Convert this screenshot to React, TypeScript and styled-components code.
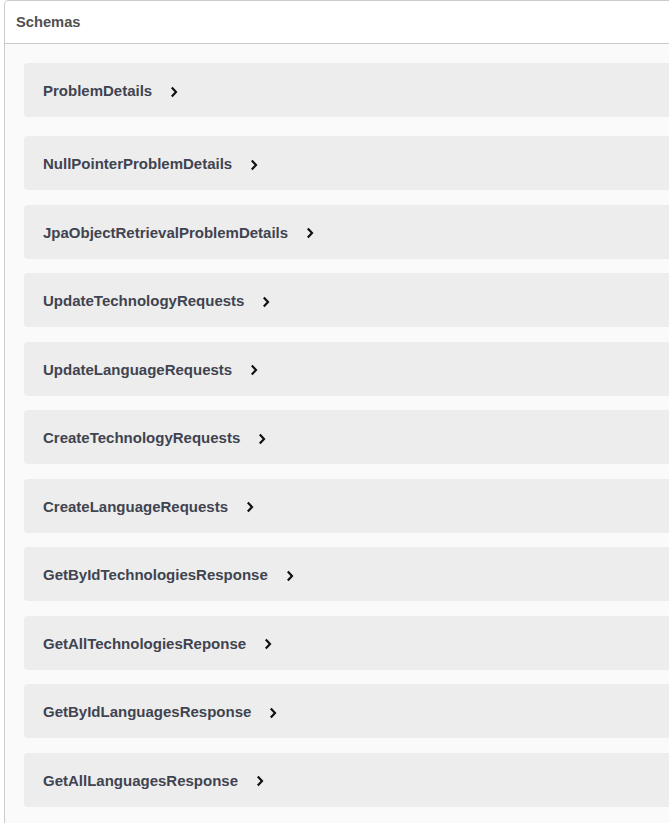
import React from 'react'
import styled, { createGlobalStyle } from 'styled-components'

const GlobalStyle = createGlobalStyle`
  html, body {
    margin: 0;
    padding: 0;
    background: #ffffff;
    overflow: hidden;
  }
  body {
    font-family: 'Liberation Sans', Arial, sans-serif;
  }
`

const SCHEMAS = [
  'ProblemDetails',
  'NullPointerProblemDetails',
  'JpaObjectRetrievalProblemDetails',
  'UpdateTechnologyRequests',
  'UpdateLanguageRequests',
  'CreateTechnologyRequests',
  'CreateLanguageRequests',
  'GetByIdTechnologiesResponse',
  'GetAllTechnologiesReponse',
  'GetByIdLanguagesResponse',
  'GetAllLanguagesResponse',
]

const Page = styled.div`
  padding-left: 4px;
  width: 665px;
  height: 823px;
  overflow: hidden;
`

const Section = styled.section`
  width: 720px;
  height: 900px;
  border: 1px solid #cbcbcb;
  border-radius: 4px;
  background: #fafafa;
`

const Header = styled.h4`
  margin: 0;
  height: 43px;
  display: flex;
  align-items: center;
  padding: 0 0 0 11px;
  box-sizing: border-box;
  border-bottom: 1px solid #c9c9c9;
  background: #ffffff;
  border-radius: 4px 4px 0 0;
  font-size: 14.7px;
  font-weight: 700;
  color: #505050;
`

const List = styled.div`
  display: flex;
  flex-direction: column;
  padding: 19px 0 0 19px;
`

const ModelContainer = styled.div<{ first?: boolean }>`
  height: 54px;
  margin-bottom: ${({ first }) => (first ? '19px' : '14.5px')};
  background: #ededed;
  border-radius: 4px;
  display: flex;
  align-items: center;
  padding: 1px 0 0 19px;
  box-sizing: border-box;
`

const ModelTitle = styled.span`
  font-size: 15px;
  font-weight: 700;
  color: #3f4450;
`

const Toggle = styled.svg`
  width: 8px;
  height: 12px;
  margin-left: 18px;
  margin-top: 2px;
`

const Chevron = () => (
  <Toggle viewBox="0 0 8 12">
    <path d="M1.8 1.5 L6 6 L1.8 10.5" fill="none" stroke="#111" strokeWidth="2.2" />
  </Toggle>
)

const App: React.FC = () => {
  return (
    <Page>
      <GlobalStyle />
      <Section>
        <Header>Schemas</Header>
        <List>
          {SCHEMAS.map((name, i) => (
            <ModelContainer key={name} first={i === 0}>
              <ModelTitle>{name}</ModelTitle>
              <Chevron />
            </ModelContainer>
          ))}
        </List>
      </Section>
    </Page>
  )
}

export default App
